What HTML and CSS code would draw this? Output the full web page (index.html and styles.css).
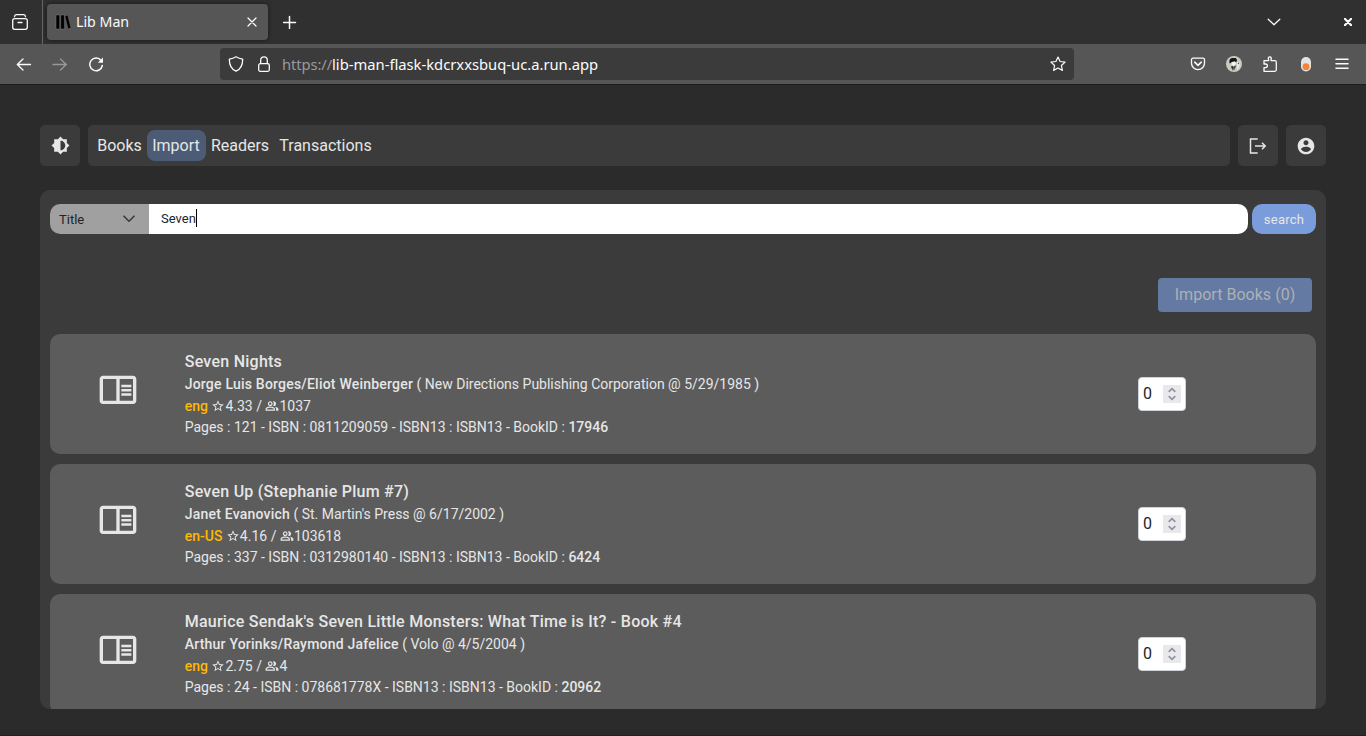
FILE: index.html
```html
<!DOCTYPE html>
<html lang="en">
<head>
<meta charset="utf-8">
<title>Lib Man</title>
<link rel="stylesheet" href="styles.css">
</head>
<body>
<svg class="defs" aria-hidden="true">
  <symbol id="reader" viewBox="0 0 24 24"><path d="M21 4H3c-1.1 0-2 .9-2 2v13c0 1.1.9 2 2 2h18c1.1 0 2-.9 2-2V6c0-1.1-.9-2-2-2zM3 19V6h8v13H3zm18 0h-8V6h8v13zm-7-9.5h6V11h-6zm0 2.5h6v1.500h-6zm0 2.500h6V16h-6z"/></symbol>
  <symbol id="star" viewBox="0 0 24 24"><path d="M22 9.24l-7.19-.62L12 2 9.190 8.630 2 9.240l5.460 4.730L5.820 21 12 17.270 18.180 21l-1.630-7.030L22 9.240zM12 15.400l-3.760 2.270 1-4.280-3.320-2.880 4.380-.380L12 6.100l1.710 4.040 4.380.380-3.320 2.880 1 4.280L12 15.400z"/></symbol>
  <symbol id="people" viewBox="0 0 24 24"><path d="M16.670 13.130C18.040 14.060 19 15.320 19 17v3h4v-3c0-2.180-3.570-3.470-6.330-3.870zM9 12c2.210 0 4-1.790 4-4s-1.790-4-4-4-4 1.790-4 4 1.790 4 4 4zm0-6c1.100 0 2 .9 2 2s-.9 2-2 2-2-.9-2-2 .9-2 2-2zm0 7c-2.670 0-8 1.340-8 4v3h16v-3c0-2.660-5.330-4-8-4zm6 5H3v-.990C3.200 16.290 6.300 15 9 15s5.800 1.290 6 2v1zM15 12c2.210 0 4-1.790 4-4s-1.790-4-4-4c-.470 0-.910.100-1.330.240C14.500 5.270 15 6.580 15 8s-.5 2.730-1.330 3.760c.420.140.860.240 1.330.240z"/></symbol>
  <symbol id="spin" viewBox="0 0 18 18"><path d="M5.700 6.800 9 3.700l3.300 3.100M5.700 11.200 9 14.300l3.300-3.100" fill="none" stroke="#8f8f9d" stroke-width="1.600"/></symbol>
</svg>

<header class="tabbar">
  <div class="view"><svg width="18" height="18" viewBox="0 0 18 18" class="line"><rect x="1.700" y="5.700" width="14.600" height="10.600" rx="2"/><path d="M3.500 3.600c.2-1.200 1-1.900 2-1.900h7c1 0 1.800.7 2 1.900M7 9.500h4"/></svg></div>
  <div class="tab">
    <svg width="16" height="16" viewBox="0 0 16 16"><path d="M1 1h3.700v14H1zM5.700 1h3.700v14H5.700zM9.800 1.900l3-.9L16 14l-3 1z" stroke="#77777780"/></svg>
    <span class="tab-title">Lib Man</span>
    <svg width="10" height="10" viewBox="0 0 10 10" class="line"><path d="M1 1l8 8M9 1 1 9"/></svg>
  </div>
  <svg class="newtab line" width="14" height="14" viewBox="0 0 14 14"><path d="M6.500 1.500v12M.5 7.500h12" stroke-width="1.500"/></svg>
  <div class="window-buttons">
    <svg width="14" height="8" viewBox="0 0 14 8" class="line"><path d="m1.200 1.200 5.800 5.500 5.800-5.500"/></svg>
    <svg width="8" height="8" viewBox="0 0 8 8" class="line"><path d="m.8.8 6.400 6.400m0-6.400L.8 7.200" stroke-width="2.200"/></svg>
  </div>
</header>

<div class="toolbar">
  <div class="history">
    <svg width="16" height="16" viewBox="0 0 16 16" class="line"><path d="M14.500 8.500h-13M7 3 1.300 8.500 7 14" stroke-width="1.300"/></svg>
    <svg width="16" height="16" viewBox="0 0 16 16" class="line faded"><path d="M1 8.500h13.500M8.500 3l5.700 5.500L8.500 14" stroke-width="1.300"/></svg>
    <svg width="16" height="16" viewBox="0 0 16 16" class="line"><path d="M13.200 4.700A6.300 6.300 0 1 0 14.300 9.500" stroke-width="1.500"/><path d="M15 1.500v5.200H9.800z" fill="#fbfbfe" stroke="none"/></svg>
  </div>
  <div class="url">
    <svg width="16" height="16" viewBox="0 0 16 16" class="line"><path d="M8 .8c2 1.200 4 1.900 6.700 2.400 0 5.500-1.700 9.900-6.700 12-5-2.100-6.700-6.500-6.700-12C4 2.700 6 2 8 .8z" stroke-width="1.300"/></svg>
    <svg width="14" height="16" viewBox="0 0 14 16" class="line"><rect x="1.700" y="7.700" width="10.600" height="7.600" rx="1.500"/><path d="M3.700 7.500V4.200a3.300 3.300 0 0 1 6.600 0v3.300"/></svg>
    <span class="address"><span>https://</span>lib-man-flask-kdcrxxsbuq-uc.a.run.app</span>
    <svg width="16" height="16" viewBox="0 0 16 16" class="line"><path d="m8 1 2.100 4.500 5 .6-3.700 3.400 1 4.900L8 12l-4.400 2.400 1-4.900L.9 6.100l5-.6z" stroke-width="1.200"/></svg>
  </div>
  <div class="extensions">
    <svg width="16" height="16" viewBox="0 0 16 16" class="line"><path d="M3 2.200h10c.9 0 1.500.6 1.500 1.500v3.500a6.500 6.500 0 0 1-13 0V3.700c0-.9.600-1.500 1.500-1.500z"/><path d="M4.700 6.200 8 9.300l3.300-3.100" stroke-width="1.600"/></svg>
    <svg width="16" height="16" viewBox="0 0 16 16"><circle cx="8" cy="8" r="8" fill="#c9cac0"/><path d="M3.700 7.500C2.500 3 5 1.500 8 2c3-.2 3.500 2 2.200 4.500L9 5.500 5.500 6.600z" fill="#171717"/><path d="M5.500 6 9 5.500l1 2-2 3H6z" fill="#f6f4ec"/><path d="M6.200 9.500 8 11l-.8 4-2.300-4zM8 10l2-.5-1.500 5z" fill="#393939"/><path d="m11 6 3 1-1 5-2 2z" fill="#e7e9df"/><circle cx="12.500" cy="7.500" r=".7" fill="#4b504a"/></svg>
    <svg width="16" height="16" viewBox="0 0 16 16" class="line"><path d="M2 4.700h3.900c.6 0 .9-.4.700-1C6 2.200 6.400.8 7.800.8s1.800 1.400 1.200 2.900c-.2.600.1 1 .7 1h3.100c1 0 1.500.5 1.500 1.500v7.600c0 1-.5 1.500-1.500 1.500H2v-3.700h1.500c2.500 0 2.500-3.600 0-3.600H2z"/></svg>
    <svg width="16" height="16" viewBox="0 0 16 16"><rect x="3" y="1" width="10" height="14.500" rx="5" fill="#e4e3e2"/><circle cx="8" cy="10.700" r="3.400" fill="#f58235"/></svg>
    <svg width="16" height="16" viewBox="0 0 16 16" class="line"><path d="M2 3.200h12M2 7.700h12M2 12.200h12" stroke-width="1.500"/></svg>
  </div>
</div>

<main class="page">
  <nav class="nav">
    <button class="square"><svg width="19" height="19" viewBox="0 0 24 24"><path d="M20 15.310 23.310 12 20 8.690V4h-4.690L12 .69 8.690 4H4v4.690L.69 12 4 15.310V20h4.690L12 23.310 15.310 20H20zM12 18V6c3.310 0 6 2.690 6 6s-2.690 6-6 6z"/></svg></button>
    <div class="links"><a class="books">Books</a><a class="active">Import</a><a class="readers">Readers</a><a class="transactions">Transactions</a></div>
    <button class="square"><svg width="18" height="16" viewBox="0 0 18 16" class="exit"><path d="M8.700 1H1.500v14h7.200M6 8h10M13 4.800 16.200 8 13 11.200"/></svg></button>
    <button class="square"><svg width="20" height="20" viewBox="0 0 24 24"><path d="M12 2C6.480 2 2 6.480 2 12s4.480 10 10 10 10-4.480 10-10S17.520 2 12 2zm0 3c1.660 0 3 1.340 3 3s-1.340 3-3 3-3-1.340-3-3 1.340-3 3-3zm0 14.200c-2.500 0-4.710-1.280-6-3.220.030-1.990 4-3.080 6-3.080 1.990 0 5.970 1.090 6 3.080-1.290 1.940-3.500 3.220-6 3.220z"/></svg></button>
  </nav>

  <section class="panel">
    <div class="search">
      <div class="select"><span>Title</span><svg width="12" height="8" viewBox="0 0 12 8"><path d="m1 1.200 5 5 5-5" fill="none" stroke="#343a40" stroke-width="1.600" stroke-linecap="round"/></svg></div>
      <div class="query"><span>Seven</span></div>
      <button class="go">search</button>
    </div>
    <div class="actions"><button class="import">Import Books (0)</button></div>

    <article class="card">
      <svg class="cover"><use href="#reader"/></svg>
      <div class="info">
        <h2>Seven Nights</h2>
        <p class="author"><b>Jorge Luis Borges/Eliot Weinberger</b> ( New Directions Publishing Corporation @ 5/29/1985 )</p>
        <p class="rating"><b class="lang">eng</b> <svg><use href="#star"/></svg>4.33 / <svg><use href="#people"/></svg>1037</p>
        <p class="meta">Pages : 121 - ISBN : 0811209059 - ISBN13 : ISBN13 - BookID : <b>17946</b></p>
      </div>
      <div class="count"><span>0</span><svg><use href="#spin"/></svg></div>
    </article>
    <article class="card">
      <svg class="cover"><use href="#reader"/></svg>
      <div class="info">
        <h2>Seven Up (Stephanie Plum #7)</h2>
        <p class="author"><b>Janet Evanovich</b> ( St. Martin's Press @ 6/17/2002 )</p>
        <p class="rating"><b class="lang">en-US</b> <svg><use href="#star"/></svg>4.16 / <svg><use href="#people"/></svg>103618</p>
        <p class="meta">Pages : 337 - ISBN : 0312980140 - ISBN13 : ISBN13 - BookID : <b>6424</b></p>
      </div>
      <div class="count"><span>0</span><svg><use href="#spin"/></svg></div>
    </article>
    <article class="card">
      <svg class="cover"><use href="#reader"/></svg>
      <div class="info">
        <h2>Maurice Sendak's Seven Little Monsters: What Time is It? - Book #4</h2>
        <p class="author"><b>Arthur Yorinks/Raymond Jafelice</b> ( Volo @ 4/5/2004 )</p>
        <p class="rating"><b class="lang">eng</b> <svg><use href="#star"/></svg>2.75 / <svg><use href="#people"/></svg>4</p>
        <p class="meta">Pages : 24 - ISBN : 078681778X - ISBN13 : ISBN13 - BookID : <b>20962</b></p>
      </div>
      <div class="count"><span>0</span><svg><use href="#spin"/></svg></div>
    </article>
  </section>
</main>
</body>
</html>
```

FILE: styles.css
```css
* { box-sizing: border-box; }
body { margin: 0; height: 736px; overflow: hidden; display: flex; flex-direction: column; background: #2b2b2b; color: #e6e6e6; font-family: Roboto, sans-serif; }
svg { display: block; flex: none; }
.defs { position: absolute; width: 0; height: 0; }
.line { fill: none; stroke: #fbfbfe; stroke-width: 1.3; stroke-linecap: round; stroke-linejoin: round; }
.faded { opacity: .4; }

.tabbar { height: 44px; flex: none; display: flex; align-items: center; background: #303030; font-family: "Noto Sans", sans-serif; }
.view { width: 43px; height: 44px; padding: 13px 0 0 11px; border-right: 1px solid #666; }
.tab { width: 221px; height: 36px; margin-left: 4px; padding: 0 11px 0 8px; display: flex; align-items: center; background: #565656; border-radius: 4px; box-shadow: 0 0 4px #0008; }
.tab-title { flex: 1; margin-left: 5px; font-size: 14.200px; line-height: 20px; color: #fbfbfe; }
.newtab { margin-left: 15px; }
.window-buttons { margin-left: auto; padding-right: 14px; display: flex; align-items: center; gap: 63px; }

.toolbar { height: 40px; flex: none; display: flex; align-items: center; background: #565656; font-family: "Noto Sans", sans-serif; }
.history { width: 220px; padding-left: 16px; display: flex; gap: 20px; }
.url { width: 854px; height: 32px; padding: 0 8px; display: flex; align-items: center; background: #3b3b3b; border-radius: 4px; }
.url svg:nth-child(2) { margin-left: 13px; }
.address { flex: 1; margin-left: 11px; font-size: 14.750px; line-height: 20px; color: #fbfbfe; }
.address span { color: #9a9a9a; letter-spacing: -.1px; }
.extensions { margin-left: auto; padding-right: 16px; display: flex; gap: 20px; }

.page { flex: 1; padding: 40px 40px 0; border-top: 1px solid #1c1c1c; border-bottom: 1px solid #232021; }
.nav { height: 41px; display: flex; gap: 8px; }
button { padding: 0; border: 0; font-family: Roboto, sans-serif; color: #e6e6e6; }
.square { width: 40px; background: #3b3b3b; border-radius: 5px; display: flex; align-items: center; justify-content: center; fill: #e6e6e6; }
.exit { fill: none; stroke: #e6e6e6; stroke-width: 1.500; }
.links { flex: 1; display: flex; align-items: center; padding-left: 5px; background: #3b3b3b; border-radius: 5px; font-size: 16px; line-height: 31px; }
.links a { height: 31px; text-align: center; border-radius: 8px; }
.books { width: 53px; }
.links .active { width: 59px; margin-left: 1px; padding-right: 1px; background: #4c5b76; }
.readers { width: 68px; }
.transactions { width: 103px; }

.panel { height: 519px; margin-top: 24px; padding: 14px 10px 0; overflow: hidden; background: #3b3b3b; border-radius: 10px; }
.search { height: 30px; display: flex; font-size: 13px; }
.select { width: 99px; padding: 0 14px 0 9px; display: flex; align-items: center; justify-content: space-between; background: #a0a0a0; color: #212529; border-radius: 10px 0 0 10px; }
.query { flex: 1; padding: 5px 0 0 12px; background: #fff; color: #212529; border-radius: 0 10px 10px 0; display: flex; }
.query span { height: 18px; line-height: 19px; border-right: 1px solid #000; }
.go { width: 64px; margin-left: 4px; font-size: 13px; letter-spacing: .25px; background: #7b9cda; border-radius: 10px; }
.actions { height: 100px; padding: 44px 4px 0 0; display: flex; justify-content: flex-end; }
.import { width: 154px; height: 34px; padding-bottom: 1px; font-size: 16px; letter-spacing: .03px; color: #adb0b5; background: #647aa3; border-radius: 4px; }

.card { height: 120px; margin-bottom: 10px; padding-top: 15px; display: flex; background: #5c5c5c; border-radius: 10px; }
.cover { width: 40px; height: 40px; margin: 20px 46.500px 0 47.500px; fill: #e6e6e6; }
.info { flex: 1; padding: 1px 0 0 .7px; font-size: 14px; }
.info h2 { margin: 0; font-size: 16px; font-weight: 500; line-height: 24px; letter-spacing: .25px; }
.info p { margin: 0; line-height: 21px; }
.info b { font-weight: 500; }
.info .author { margin-bottom: 1px; }
.author b { letter-spacing: .21px; }
.rating svg { display: inline-block; width: 14px; height: 14px; fill: #e6e6e6; vertical-align: -2px; }
.info .lang { color: #ffb900; }
.count { width: 48px; height: 34px; margin: 28px 130px 0 0; padding: 0 4px; display: flex; align-items: center; justify-content: space-between; background: #fff; border: 1px solid #ced4da; border-radius: 4px; color: #212529; font-size: 16px; }
.count span { padding-bottom: 2px; }
.count svg { width: 18px; height: 18px; background: #e9e9ed; }
```
